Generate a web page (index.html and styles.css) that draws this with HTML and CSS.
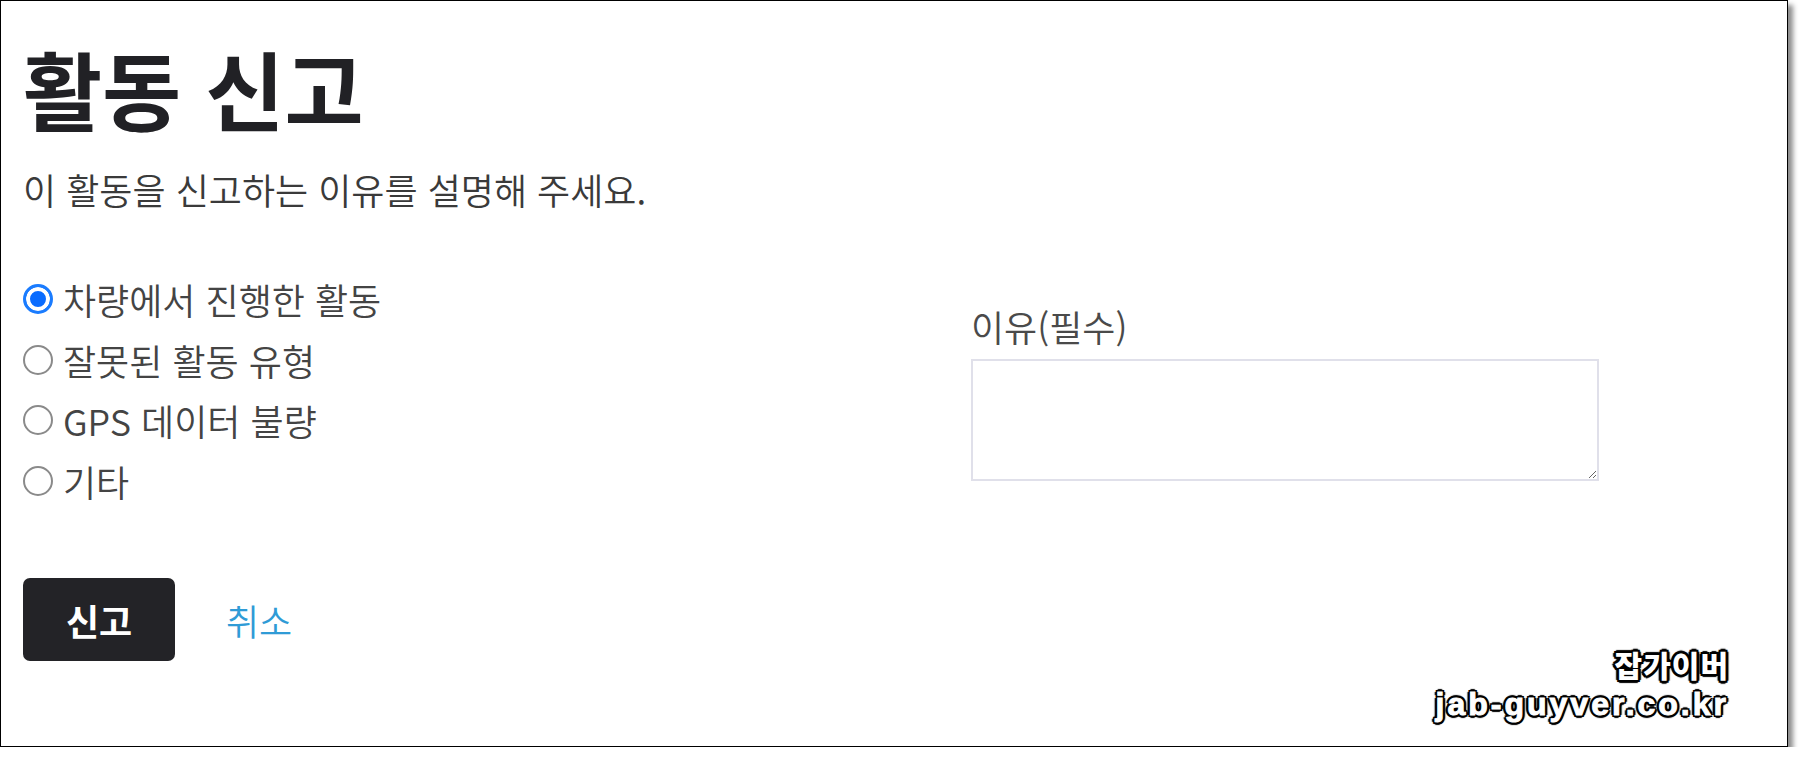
FILE: index.html
```html
<!DOCTYPE html>
<html lang="ko">
<head>
    <meta charset="UTF-8">
    <meta name="viewport" content="width=device-width, initial-scale=1.0">
    <title>활동 신고</title>
    <link rel="stylesheet" href="styles.css">
</head>

<body>
    <div class="frame">
        <h1>활동 신고</h1>
        <p class="lead">이 활동을 신고하는 이유를 설명해 주세요.</p>

        <div class="report-grid">
            <div class="reasons">
                <label class="option"><input type="radio" name="reason" checked> 차량에서 진행한 활동</label>
                <label class="option"><input type="radio" name="reason"> 잘못된 활동 유형</label>
                <label class="option"><input type="radio" name="reason"> GPS 데이터 불량</label>
                <label class="option"><input type="radio" name="reason"> 기타</label>
            </div>
            <div class="detail">
                <label class="field-label" for="reasonText">이유(필수)</label>
                <textarea id="reasonText"></textarea>
            </div>
        </div>

        <div class="actions">
            <button type="button" class="btn-report">신고</button>
            <a href="#" class="btn-cancel">취소</a>
        </div>

        <div class="watermark">
            <span class="wm-name">잡가이버</span>
            <span class="wm-url">jab-guyver.co.kr</span>
        </div>
    </div>
</body>
</html>
```

FILE: styles.css
```css
/* General Styles */
body {
    margin: 0;
    padding: 0;
    background-color: #fff;
    font-family: "Noto Sans CJK KR", "Noto Sans", sans-serif;
    color: #333;
}

.frame {
    position: relative;
    box-sizing: border-box;
    width: 1788px;
    height: 747px;
    padding: 37px 22px 0 22px;
    border: 1px solid #000;
    background-color: #fff;
    box-shadow: 5px 5px 5px rgba(0, 0, 0, 0.45);
}

h1 {
    margin: 0;
    font-size: 86px;
    line-height: 100px;
    font-weight: 700;
    color: #212125;
}

.lead {
    margin: 30px 0 0 0;
    font-size: 36px;
    line-height: 42px;
    font-weight: 350;
    color: #3a3a3a;
}

/* Form Styles */
.report-grid {
    display: grid;
    grid-template-columns: 948px 628px;
    margin-top: 59px;
}

.reasons {
    display: flex;
    flex-direction: column;
}

.option {
    display: flex;
    align-items: center;
    gap: 10px;
    height: 60.5px;
    font-size: 36px;
    font-weight: 350;
    color: #444;
}

.option input {
    appearance: none;
    -webkit-appearance: none;
    box-sizing: border-box;
    width: 30px;
    height: 30px;
    margin: 0;
    border: 2px solid #8a8a8a;
    border-radius: 50%;
    background-color: #fff;
}

.option input:checked {
    border: 3px solid #1a7cff;
    background-color: #0a6cff;
    box-shadow: inset 0 0 0 4px #fff;
}

.detail {
    display: flex;
    flex-direction: column;
    padding-top: 37px;
}

.field-label {
    font-size: 36px;
    line-height: 40px;
    font-weight: 350;
    color: #4a4a4a;
}

textarea {
    box-sizing: border-box;
    width: 628px;
    height: 122px;
    margin-top: 13px;
    border: 2px solid #e0e0ea;
    outline: none;
}

/* Button Styles */
.actions {
    display: flex;
    align-items: center;
    gap: 51px;
    margin-top: 67px;
}

.btn-report {
    width: 152px;
    height: 83px;
    border: none;
    border-radius: 7px;
    background-color: #232327;
    color: #fff;
    font-family: inherit;
    font-size: 36px;
    font-weight: 700;
}

.btn-cancel {
    font-size: 36px;
    font-weight: 350;
    color: #2f9bd6;
    text-decoration: none;
}

/* Watermark */
.watermark {
    position: absolute;
    right: 58px;
    bottom: 22px;
    display: flex;
    flex-direction: column;
    align-items: flex-end;
    line-height: 40px;
    color: #fff;
    text-shadow:
        2px 0 0 #000, -2px 0 0 #000, 0 2px 0 #000, 0 -2px 0 #000,
        2px 2px 0 #000, -2px -2px 0 #000, 2px -2px 0 #000, -2px 2px 0 #000,
        3px 0 1px #000, -3px 0 1px #000, 0 3px 1px #000, 0 -3px 1px #000;
}

.wm-name {
    font-size: 30px;
    font-weight: 900;
    letter-spacing: 1px;
}

.wm-url {
    font-family: "Liberation Sans", Arial, sans-serif;
    font-size: 32px;
    font-weight: 700;
    letter-spacing: 3px;
    -webkit-text-stroke: 1px #fff;
}
```
